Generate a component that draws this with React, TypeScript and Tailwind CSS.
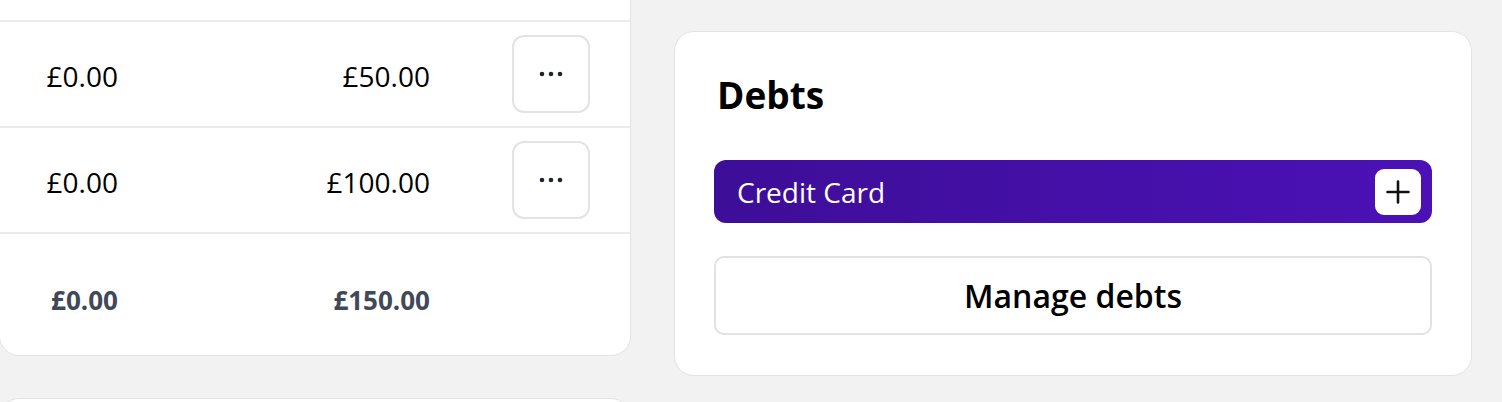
import React from "react";

function Dots() {
  return (
    <svg width="24" height="8" viewBox="0 0 24 8" aria-hidden>
      <circle cx="3" cy="4" r="2.3" fill="#1f2430" />
      <circle cx="12" cy="4" r="2.3" fill="#1f2430" />
      <circle cx="21" cy="4" r="2.3" fill="#1f2430" />
    </svg>
  );
}

function Row({ a, b }: { a: string; b: string }) {
  return (
    <div className="flex items-center h-[106px] pr-[40px] border-b-2 border-[#ebebeb] text-[28px] text-black">
      <div className="w-[118px] text-right pt-[3px]">{a}</div>
      <div className="w-[312px] text-right pt-[3px]">{b}</div>
      <div className="w-[82px]" />
      <button className="w-[78px] h-[78px] rounded-[12px] border-2 border-[#e3e3e3] bg-white flex items-center justify-center">
        <Dots />
      </button>
    </div>
  );
}

export default function App() {
  return (
    <div
      className="h-[402px] w-[1502px] overflow-hidden bg-[#f2f2f2] flex items-start gap-[43px]"
      style={{ fontFamily: '"Open Sans", "Noto Sans", sans-serif' }}
    >
      <div className="w-[632px] ml-[-1px] flex flex-col gap-[42px] shrink-0">
        <div className="shrink-0 mt-[-31px] bg-white border border-[#e3e3e3] rounded-[20px] overflow-hidden">
          <div className="h-[52px] border-b-2 border-[#ebebeb]" />
          <Row a="£0.00" b="£50.00" />
          <Row a="£0.00" b="£100.00" />
          <div className="flex items-center h-[121px] pt-[12px] text-[26px] font-bold text-[#414958]">
            <div className="w-[118px] text-right">£0.00</div>
            <div className="w-[312px] text-right">£150.00</div>
          </div>
        </div>
        <div className="shrink-0 h-[200px] bg-white border border-[#e3e3e3] rounded-[20px]" />
      </div>

      <div className="w-[798px] shrink-0 mt-[31px] bg-white border border-[#e3e3e3] rounded-[20px] px-[39px] pt-[38px] pb-[40px]">
        <h2 className="ml-[3px] text-[37px] leading-[49px] font-bold text-black">Debts</h2>
        <div className="mt-[41px] h-[63px] rounded-[12px] bg-gradient-to-r from-[#3d0e98] to-[#4b11b6] flex items-center justify-between pl-[23px] pr-[11px]">
          <span className="text-[28px] text-white leading-none">Credit Card</span>
          <button className="w-[46px] h-[46px] rounded-[9px] bg-white flex items-center justify-center">
            <svg width="24" height="24" viewBox="0 0 24 24" aria-hidden>
              <path d="M12 1.5V22.5M1.5 12H22.5" stroke="#111" strokeWidth="2.6" strokeLinecap="round" />
            </svg>
          </button>
        </div>
        <button className="mt-[33px] w-full h-[79px] rounded-[10px] border-2 border-[#e2e2e2] bg-white flex items-center justify-center text-[32px] font-semibold text-black">
          Manage debts
        </button>
      </div>
    </div>
  );
}
